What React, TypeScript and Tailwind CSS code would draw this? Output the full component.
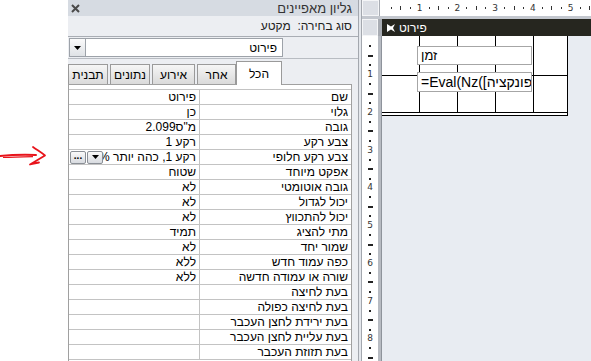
import React from "react";

const rows: [string, string][] = [
  ["שם", "פירוט"],
  ["גלוי", "כן"],
  ["גובה", "__cm"],
  ["צבע רקע", "רקע 1"],
  ["צבע רקע חלופי", "__special"],
  ["אפקט מיוחד", "שטוח"],
  ["גובה אוטומטי", "לא"],
  ["יכול לגדול", "לא"],
  ["יכול להתכווץ", "לא"],
  ["מתי להציג", "תמיד"],
  ["שמור יחד", "לא"],
  ["כפה עמוד חדש", "ללא"],
  ["שורה או עמודה חדשה", "ללא"],
  ["בעת לחיצה", ""],
  ["בעת לחיצה כפולה", ""],
  ["בעת ירידת לחצן העכבר", ""],
  ["בעת עליית לחצן העכבר", ""],
  ["בעת תזוזת העכבר", ""],
];

function Value({ v }: { v: string }) {
  if (v === "__cm") {
    return (
      <div className="flex-1 text-right pr-[3px]">
        <bdo dir="ltr">2.099ס"מ</bdo>
      </div>
    );
  }
  if (v === "__special") {
    return (
      <div className="flex-1 flex items-center min-w-0 pl-[1px]">
        <div className="w-[16px] h-[13px] shrink-0 border border-[#8a8f96] rounded-[2px] bg-gradient-to-b from-[#fafafa] to-[#d8dbe0] flex items-center justify-center text-[10px] leading-none font-bold text-black pb-[3px]">
          ...
        </div>
        <div className="ml-[1px] w-[16px] h-[13px] shrink-0 border border-[#8a8f96] rounded-[2px] bg-gradient-to-b from-[#fafafa] to-[#d8dbe0] flex items-center justify-center">
          <svg width="7" height="4" viewBox="0 0 7 4">
            <polygon points="0,0 7,0 3.5,4" fill="#000" />
          </svg>
        </div>
        <div dir="rtl" className="flex-1 min-w-0 overflow-hidden whitespace-nowrap text-right pr-[3px]">
          רקע 1, כהה יותר 5%
        </div>
      </div>
    );
  }
  return (
    <div dir="rtl" className="flex-1 text-right pr-[3px] whitespace-nowrap overflow-hidden">
      {v}
    </div>
  );
}

function HRuler() {
  const items = Array.from({ length: 22 }, (_, k) => k + 1);
  return (
    <div className="flex-1 bg-white flex items-center overflow-hidden">
      <div className="w-[6.7px] shrink-0" />
      {items.map((i) => (
        <div key={i} className="w-[9.45px] shrink-0 flex items-center justify-center h-[16px]">
          {i % 4 === 0 ? (
            <span className="text-[9px] leading-none text-[#333] font-['DejaVu_Sans',sans-serif]">{i / 4}</span>
          ) : i % 2 === 0 ? (
            <div className="w-[1px] h-[4px] bg-[#333]" />
          ) : (
            <div className="w-[1px] h-[2px] bg-[#333]" />
          )}
        </div>
      ))}
    </div>
  );
}

function VRuler() {
  const items = Array.from({ length: 34 }, (_, k) => k + 1);
  return (
    <div className="w-[16px] bg-white flex flex-col items-center overflow-hidden shrink-0">
      <div className="h-[5.7px] shrink-0" />
      {items.map((i) => (
        <div key={i} className="h-[9.45px] shrink-0 flex items-center justify-center w-[16px]">
          {i % 4 === 0 ? (
            <span className="text-[9px] leading-none text-[#333] font-['DejaVu_Sans',sans-serif]">{i / 4}</span>
          ) : i % 2 === 0 ? (
            <div className="w-[5px] h-[2px] bg-[#222]" />
          ) : (
            <div className="w-[2px] h-[2px] bg-[#222]" />
          )}
        </div>
      ))}
    </div>
  );
}

function GridRow({ h }: { h: string }) {
  const widths = ["w-[38px]", "w-[38px]", "w-[38px]", "w-[38px]", "w-[33px]"];
  return (
    <div className={`flex border-b border-black ${h}`}>
      {widths.map((w, i) => (
        <div key={i} className={`${w} ${i < 4 ? "border-r border-black" : ""}`} />
      ))}
    </div>
  );
}

export default function App() {
  return (
    <div className="w-[591px] h-[361px] flex bg-white overflow-hidden font-['Liberation_Sans',Arial,sans-serif] text-[12px] text-black">
      {/* left gutter with red arrow */}
      <div className="w-[68px] shrink-0 pt-[143px]">
        <svg width="50" height="26" viewBox="0 0 50 26">
          <path d="M0 13 C10 12, 22 11.5, 36 12" stroke="#e8141b" strokeWidth="2" fill="none" strokeLinecap="round" />
          <path d="M3 14.5 C12 14, 22 13.8, 33 13.6" stroke="#e8141b" strokeWidth="1.2" fill="none" />
          <path d="M33 4 C37 7, 41 9, 45 12.5 C40 15.5, 35 18.5, 30 21.5 C33 20.5, 36 20, 39 19.5" stroke="#e8141b" strokeWidth="1.8" fill="none" strokeLinecap="round" strokeLinejoin="round" />
        </svg>
      </div>

      {/* property sheet panel */}
      <div className="w-[290px] shrink-0 flex flex-col bg-[#eceef2]">
        <div className="h-[16px] bg-[#d6dbe2] flex items-center justify-between pl-[3px] pr-[6px]">
          <svg width="9" height="9" viewBox="0 0 9 9">
            <path d="M1 1 L8 8 M8 1 L1 8" stroke="#4a4a4a" strokeWidth="2" />
          </svg>
          <span dir="rtl" className="text-[13px] leading-none text-[#333]">גליון מאפיינים</span>
        </div>
        <div className="h-[21px] flex items-center justify-end pr-[6px] border-b border-[#a9adb4]">
          <span dir="rtl" className="text-[12px] text-[#222]">סוג בחירה:&nbsp; מקטע</span>
        </div>
        <div className="h-[22px] flex items-center pl-[1px] border-b border-[#b8bcc2]">
          <div className="w-[214px] h-[19px] bg-white border border-[#9da2a9] flex items-center">
            <div className="w-[16px] h-[17px] border-r border-[#9da2a9] bg-gradient-to-b from-[#fbfbfb] to-[#dfe2e6] flex items-center justify-center">
              <svg width="7" height="4" viewBox="0 0 7 4">
                <polygon points="0,0 7,0 3.5,4" fill="#000" />
              </svg>
            </div>
            <div dir="rtl" className="flex-1 text-right pr-[5px] text-[12px]">פירוט</div>
          </div>
        </div>
        {/* tabs */}
        <div className="h-[25px] flex items-end">
          <div className="w-[40px] h-[20px] border border-b-0 border-[#9a9a9a] bg-gradient-to-b from-[#f6f6f6] to-[#dadada] flex items-center justify-center">תבנית</div>
          <div className="ml-[2px] w-[40px] h-[20px] border border-b-0 border-[#9a9a9a] bg-gradient-to-b from-[#f6f6f6] to-[#dadada] flex items-center justify-center">נתונים</div>
          <div className="ml-[2px] w-[43px] h-[20px] border border-b-0 border-[#9a9a9a] bg-gradient-to-b from-[#f6f6f6] to-[#dadada] flex items-center justify-center">אירוע</div>
          <div className="ml-[2px] w-[39px] h-[20px] border border-b-0 border-[#9a9a9a] bg-gradient-to-b from-[#f6f6f6] to-[#dadada] flex items-center justify-center">אחר</div>
          <div className="w-[46px] h-[24px] border border-b-0 border-[#9a9a9a] bg-white flex items-start justify-center pt-[3px] relative top-[1px]">הכל</div>
        </div>
        {/* content box */}
        <div className="w-[284px] flex-1 bg-white border border-b-0 border-[#a0a0a0] pt-[4px]">
          <div className="border-t border-[#c3c3c3]">
            {rows.map(([label, v], i) => (
              <div key={i} className="h-[15px] flex border-b border-[#c3c3c3] leading-[14px]">
                <div className="w-[131px] border-r border-[#c3c3c3] flex">
                  <Value v={v} />
                </div>
                <div dir="rtl" className="flex-1 text-right pr-[3px] whitespace-nowrap">
                  {label}
                </div>
              </div>
            ))}
          </div>
        </div>
      </div>

      {/* splitter */}
      <div className="w-[4px] shrink-0 flex">
        <div className="w-[1px] bg-[#a3a7ae]" />
        <div className="w-[2px] bg-[#e4e7ec]" />
        <div className="w-[1px] bg-[#a3a7ae]" />
      </div>

      {/* design area */}
      <div className="flex-1 flex flex-col min-w-0">
        <div className="h-[16px] flex">
          <div className="w-[17px] shrink-0 bg-[#dcdfe5] border border-[#f4f5f7]" />
          <div className="w-[1px] bg-[#a8acb3]" />
          <HRuler />
        </div>
        <div className="h-[3px] bg-[#c3c7ce]" />
        <div className="h-[17px] flex">
          <div className="w-[16px] shrink-0 bg-[#dcdfe5] border border-[#f4f5f7]" />
          <div className="w-[4px] shrink-0 bg-[#a8acb3]" />
          <div className="flex-1 bg-[#26261f] flex items-center pl-[4px] gap-[3px]">
            <svg width="10" height="10" viewBox="0 0 10 10">
              <path d="M9 1 L9 9 L5 6.5 L1 9 L3 5 L1 1 L5 3.5 Z" fill="#ffffff" transform="scale(-1,1) translate(-10,0)" />
            </svg>
            <span dir="rtl" className="text-white text-[12px] leading-none">פירוט</span>
          </div>
        </div>
        <div className="flex-1 flex min-h-0">
          <VRuler />
          <div className="w-[4px] shrink-0 flex">
            <div className="w-[3px] bg-[#b7bbc2]" />
            <div className="w-[1px] bg-[#8e939b]" />
          </div>
          <div className="flex-1 bg-[#e8ecf2]">
            <div className="relative w-[186px] bg-white border-r border-black">
              <GridRow h="h-[40px]" />
              <GridRow h="h-[37px]" />
              <div className="h-[3px] border-b border-black" />
              <div className="absolute left-[35px] top-[10px] w-[115px] h-[19px] border border-[#a6a6a6] bg-white flex items-center pl-[3px] text-[13px]">
                זמן
              </div>
              <div className="absolute left-[35px] top-[36px] w-[115px] h-[20px] border border-[#a6a6a6] bg-white flex items-center pl-[3px] text-[14px] overflow-hidden whitespace-nowrap">
                =Eval(Nz([פונקציה]
              </div>
            </div>
          </div>
        </div>
      </div>
    </div>
  );
}
